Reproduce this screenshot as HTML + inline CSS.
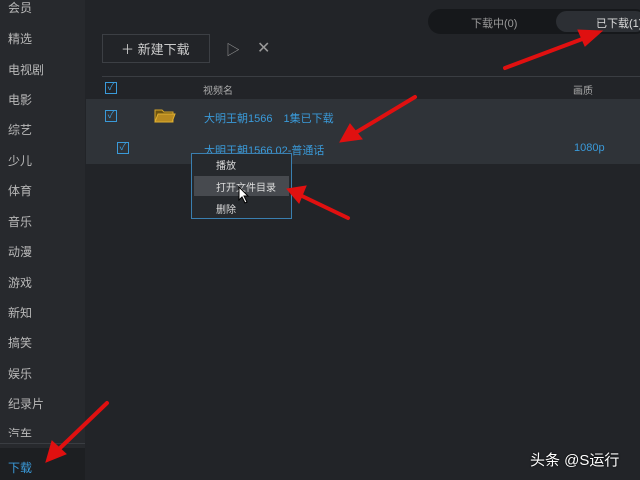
<!DOCTYPE html>
<html><head><meta charset="utf-8"><style>
*{margin:0;padding:0;box-sizing:border-box}
body{width:640px;height:480px;overflow:hidden;background:#222428;font-family:"Liberation Sans","Noto Sans CJK SC",sans-serif;position:relative;color:#c8c8c8}
.sb{position:absolute;left:0;top:0;width:85px;height:480px;background:#27292d}
.sb div{position:absolute;left:8px;font-size:12px;color:#b8b8b8;line-height:14px}
.abs{position:absolute;white-space:nowrap}
.cb{position:absolute;width:12px;height:12px;border:1px solid #3a9ad9;color:#3a9ad9;font-size:10px;line-height:10px;text-align:center}
.blue{color:#3a9ad9}
</style></head><body>
<div class="sb">
<div style="top:1px">会员</div><div style="top:32px">精选</div><div style="top:63px">电视剧</div><div style="top:93px">电影</div><div style="top:123px">综艺</div><div style="top:154px">少儿</div><div style="top:184px">体育</div><div style="top:215px">音乐</div><div style="top:245px">动漫</div><div style="top:276px">游戏</div><div style="top:306px">新知</div><div style="top:336px">搞笑</div><div style="top:367px">娱乐</div><div style="top:397px">纪录片</div><div style="top:427px;height:10px;overflow:hidden">汽车</div>
</div>
<div class="abs" style="left:0;top:443px;width:85px;height:1px;background:#3a3d42"></div>
<div class="abs" style="left:0;top:448px;width:85px;height:32px;background:#1d1f22"></div>
<div class="abs blue" style="left:8px;top:459px;font-size:12px">下载</div>

<div class="abs" style="left:428px;top:9px;width:220px;height:25px;border-radius:13px;background:#16181b"></div>
<div class="abs" style="left:556px;top:11px;width:90px;height:21px;border-radius:11px;background:#2c2f34"></div>
<div class="abs" style="left:471px;top:15px;font-size:11px;color:#9a9a9a">下载中(0)</div>
<div class="abs" style="left:596px;top:15px;font-size:11px;color:#ddd">已下载(1)</div>

<div class="abs" style="left:102px;top:34px;width:108px;height:29px;border:1px solid #3c3f44"></div>
<div class="abs" style="left:121px;top:39px;font-size:13px;color:#ccc">＋ 新建下载</div>
<div class="abs" style="left:226px;top:40px;font-size:14px;color:#999">▷</div>
<div class="abs" style="left:257px;top:38px;font-size:16px;color:#999">✕</div>

<div class="abs" style="left:102px;top:76px;width:538px;height:1px;background:#3a3d42"></div>
<div class="cb" style="left:105px;top:82px">✓</div>
<div class="abs" style="left:203px;top:82px;font-size:10px;color:#aaa">视频名</div>
<div class="abs" style="left:573px;top:82px;font-size:10px;color:#aaa">画质</div>

<div class="abs" style="left:86px;top:99px;width:554px;height:65px;background:#2f3338"></div>
<div class="cb" style="left:105px;top:110px">✓</div>
<svg class="abs" style="left:154px;top:108px" width="22" height="16"><path d="M1 2h7l2 2h9v10H1z" fill="#6b5210" stroke="#d4a52a"/><path d="M1 14l3-8h17l-3 8z" fill="#b88a20" stroke="#e0b030"/></svg>
<div class="abs blue" style="left:204px;top:110px;font-size:11px">大明王朝1566　1集已下载</div>
<div class="cb" style="left:117px;top:142px">✓</div>
<div class="abs blue" style="left:204px;top:142px;font-size:11px">大明王朝1566 02-普通话</div>
<div class="abs blue" style="left:574px;top:142px;font-size:11px">1080p</div>

<div class="abs" style="left:191px;top:153px;width:101px;height:66px;background:#26292d;border:1px solid #3a7fb0"></div>
<div class="abs" style="left:194px;top:176px;width:95px;height:20px;background:#474a4f"></div>
<div class="abs" style="left:216px;top:157px;font-size:10px;color:#ddd">播放</div>
<div class="abs" style="left:216px;top:179px;font-size:10px;color:#ddd">打开文件目录</div>
<div class="abs" style="left:216px;top:201px;font-size:10px;color:#ddd">删除</div>
<svg class="abs" style="left:238px;top:186px" width="12" height="18"><path d="M1 1v13l3-3 3 6 2-1-3-6h4z" fill="#fff" stroke="#000" stroke-width="1"/></svg>

<svg class="abs" style="left:0;top:0" width="640" height="480">
<g stroke="#e01010" stroke-width="4" stroke-linecap="round" fill="#e01010">
<line x1="505" y1="68" x2="585" y2="38"/><polygon points="602,31 578,30 585,46" stroke-width="1"/>
<line x1="415" y1="97" x2="355" y2="133"/><polygon points="340,142 350,124 362,139" stroke-width="1"/>
<line x1="348" y1="218" x2="302" y2="196"/><polygon points="287,189 306,186 299,203" stroke-width="1"/>
<line x1="107" y1="403" x2="58" y2="450"/><polygon points="46,462 52,441 66,454" stroke-width="1"/>
</g></svg>
<div class="abs" style="left:530px;top:449px;font-size:15px;color:#fff;text-shadow:0 0 2px #000">头条 @S运行</div>
</body></html>
